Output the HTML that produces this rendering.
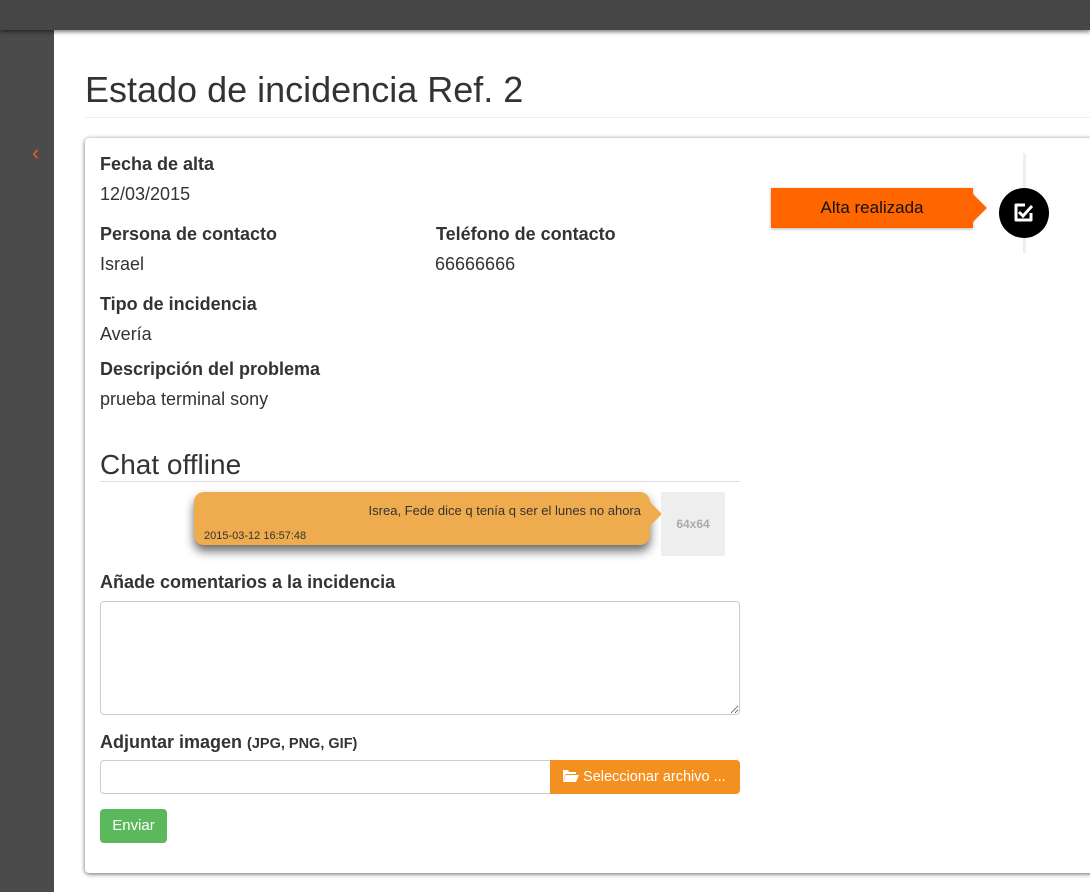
<!DOCTYPE html>
<html><head><meta charset="utf-8"><style>
*{box-sizing:border-box}
body{margin:0;width:1090px;height:892px;overflow:hidden;background:#4a4a4a;font-family:"Liberation Sans",Arial,sans-serif;color:#333;position:relative}
.top{position:absolute;left:0;top:0;width:1090px;height:30px;background:#464646;box-shadow:0 2px 4px rgba(0,0,0,.5);z-index:2}
.side{position:absolute;left:0;top:30px;width:54px;height:862px;background:#4b4b4b}
.arrow{position:absolute;left:32px;top:110px;color:#f05a1a;font-size:22px}
.main{position:absolute;left:54px;top:30px;width:1036px;height:862px;background:#fff}
h1{position:absolute;left:31px;top:39px;margin:0;font-weight:normal;font-size:36px;color:#333}
.hr1{position:absolute;left:31px;top:87px;width:1005px;height:1px;background:#eee}
.panel{position:absolute;left:31px;top:108px;width:1010px;height:735px;background:#fff;border-radius:4px;box-shadow:0 1px 5px rgba(0,0,0,.6)}
.lab{position:absolute;font-weight:bold;font-size:18px;color:#333}
.val{position:absolute;font-size:18px;color:#333}
.chat{position:absolute;left:15px;top:311px;font-size:28px;color:#333}
.hr2{position:absolute;left:15px;top:343px;width:640px;height:1px;background:#ddd}
.bub{position:absolute;left:109px;top:354px;width:456px;height:53px;background:#efac4e;border-radius:10px;box-shadow:0 6px 10px rgba(0,0,0,.6)}
.bub:after{content:"";position:absolute;right:-12px;top:10px;border-left:12px solid #efac4e;border-top:12px solid transparent;border-bottom:12px solid transparent}
.ph{position:absolute;left:576px;top:354px;width:64px;height:64px;background:#eee;color:#aaa;font-weight:bold;font-size:12px;text-align:center;line-height:64px}
textarea{position:absolute;left:15px;top:463px;width:640px;height:114px;border:1px solid #ccc;border-radius:4px}
.inp{position:absolute;left:15px;top:622px;width:451px;height:34px;border:1px solid #ccc;border-radius:4px 0 0 4px}
.btn{position:absolute;left:465px;top:622px;width:190px;height:34px;background:#f39020;border-radius:0 4px 4px 0;color:#fff;font-size:14.5px;line-height:34px;padding-left:12px;white-space:nowrap}
.env{position:absolute;left:15px;top:671px;width:67px;height:34px;background:#5cb85c;border-radius:4px;color:#fff;font-size:15px;line-height:34px;text-align:center}
.vline{position:absolute;left:938px;top:15px;width:3px;height:100px;background:#eee}
.tag{position:absolute;left:686px;top:50px;width:202px;height:40px;background:#f60;box-shadow:0 1px 3px rgba(0,0,0,.3);font-size:17px;color:#111;text-align:center;line-height:40px}
.tag:after{content:"";position:absolute;right:-14px;top:6px;border-left:14px solid #f60;border-top:14px solid transparent;border-bottom:14px solid transparent}
.circ{position:absolute;left:914px;top:50px;width:50px;height:50px;border-radius:50%;background:#000}
</style></head><body>
<div class="top"></div>
<div class="side"><span class="arrow">&#8249;</span></div>
<div class="main">
<h1>Estado de incidencia Ref. 2</h1>
<div class="hr1"></div>
<div class="panel">
<div class="lab" style="left:15px;top:16px">Fecha de alta</div>
<div class="val" style="left:15px;top:46px">12/03/2015</div>
<div class="lab" style="left:15px;top:86px">Persona de contacto</div>
<div class="lab" style="left:351px;top:86px">Teléfono de contacto</div>
<div class="val" style="left:15px;top:116px">Israel</div>
<div class="val" style="left:350px;top:116px">66666666</div>
<div class="lab" style="left:15px;top:156px">Tipo de incidencia</div>
<div class="val" style="left:15px;top:186px">Avería</div>
<div class="lab" style="left:15px;top:221px">Descripción del problema</div>
<div class="val" style="left:15px;top:251px">prueba terminal sony</div>
<div class="chat">Chat offline</div>
<div class="hr2"></div>
<div class="bub"><div style="position:absolute;right:9px;top:11px;font-size:13px;color:#333;white-space:nowrap">Isrea, Fede dice q tenía q ser el lunes no ahora</div><div style="position:absolute;left:10px;top:38px;font-size:11px;color:#333;white-space:nowrap">2015-03-12 16:57:48</div></div>
<div class="ph">64x64</div>
<div class="lab" style="left:15px;top:434px">Añade comentarios a la incidencia</div>
<textarea></textarea>
<div class="lab" style="left:15px;top:594px">Adjuntar imagen <span style="font-size:14.5px">(JPG, PNG, GIF)</span></div>
<div class="inp"></div>
<div class="btn"><svg width="17" height="13" viewBox="0 0 17 13" style="vertical-align:-1px"><path d="M1 1h5l1 2h7v2H4L1 12z" fill="#fff"/><path d="M4 6h13l-3 7H1z" fill="#fff"/></svg> Seleccionar archivo ...</div>
<div class="env">Enviar</div>
<div class="vline"></div>
<div class="tag">Alta realizada</div>
<div class="circ"><svg width="50" height="50" viewBox="0 0 50 50"><path d="M26 17h-9v15h15v-7" fill="none" stroke="#fff" stroke-width="3" stroke-linejoin="round"/><path d="M20 24l4 4 9-10" fill="none" stroke="#fff" stroke-width="3"/></svg></div>
</div>
</div>
</body></html>
